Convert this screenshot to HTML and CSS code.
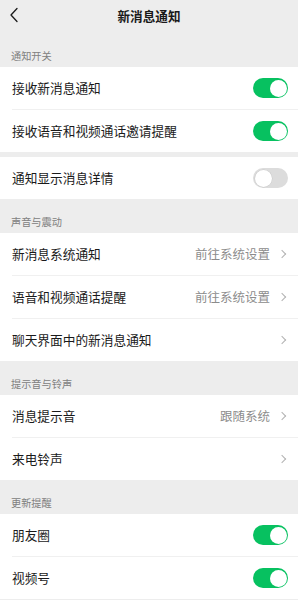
FILE: index.html
```html
<html>
<head>
<meta charset="utf-8">
<link rel="stylesheet" href="styles.css">
</head>
<body>
<div class="page">
  <div class="navbar">
    <span class="navbar__back">
      <svg width="10" height="16" viewBox="0 0 10 16" fill="none" stroke="#1a1a1a" stroke-width="1.3" stroke-linecap="round" stroke-linejoin="round"><path d="M8 1.5 L2 8 L8 14.5"/></svg>
    </span>
    <span class="navbar__title">新消息通知</span>
  </div>

  <div class="group-title">通知开关</div>
  <div class="cells">
    <div class="cell">
      <span class="cell__label">接收新消息通知</span>
      <span class="switch switch--on"></span>
    </div>
    <div class="cell">
      <span class="cell__label">接收语音和视频通话邀请提醒</span>
      <span class="switch switch--on"></span>
    </div>
  </div>
  <div class="group-gap"></div>
  <div class="cells">
    <div class="cell">
      <span class="cell__label">通知显示消息详情</span>
      <span class="switch"></span>
    </div>
  </div>

  <div class="group-title">声音与震动</div>
  <div class="cells">
    <div class="cell">
      <span class="cell__label">新消息系统通知</span>
      <span class="cell__value">前往系统设置</span>
      <span class="chevron"></span>
    </div>
    <div class="cell">
      <span class="cell__label">语音和视频通话提醒</span>
      <span class="cell__value">前往系统设置</span>
      <span class="chevron"></span>
    </div>
    <div class="cell">
      <span class="cell__label">聊天界面中的新消息通知</span>
      <span class="chevron"></span>
    </div>
  </div>

  <div class="group-title">提示音与铃声</div>
  <div class="cells">
    <div class="cell">
      <span class="cell__label">消息提示音</span>
      <span class="cell__value">跟随系统</span>
      <span class="chevron"></span>
    </div>
    <div class="cell">
      <span class="cell__label">来电铃声</span>
      <span class="chevron"></span>
    </div>
  </div>

  <div class="group-title">更新提醒</div>
  <div class="cells">
    <div class="cell">
      <span class="cell__label">朋友圈</span>
      <span class="switch switch--on"></span>
    </div>
    <div class="cell">
      <span class="cell__label">视频号</span>
      <span class="switch switch--on"></span>
    </div>
  </div>
</div>
</body>
</html>
```

FILE: styles.css
```css
/* reset */
* {
  padding: 0;
  margin: 0;
  box-sizing: border-box;
}

body {
  background-color: #ededed;
  font-family: "Noto Sans CJK SC", "Noto Sans", sans-serif;
  color: #1a1a1a;
}

.page {
  width: 298px;
  height: 600px;
  overflow: hidden;
}

.navbar {
  height: 33px;
  display: flex;
  align-items: center;
  justify-content: center;
  position: relative;
}

.navbar__back {
  position: absolute;
  left: 9px;
  top: 7px;
  display: flex;
}

.navbar__title {
  font-size: 12.6px;
  font-weight: bold;
  line-height: 1;
}

.group-title {
  height: 34px;
  display: flex;
  align-items: flex-end;
  padding: 0 0 5px 11px;
  font-size: 10.2px;
  line-height: 12px;
  color: #808080;
}

.group-gap {
  height: 5px;
}

.cells {
  background-color: #fff;
}

.cell {
  height: 43px;
  margin-left: 12px;
  padding-right: 10px;
  display: flex;
  align-items: center;
  border-bottom: 1px solid #f0f0f0;
}

.cell:last-child {
  height: 42px;
  border-bottom: 0;
}

.cell__label {
  flex: 1;
  font-size: 12.7px;
  line-height: 1;
}

.cell__value {
  font-size: 12.5px;
  line-height: 1;
  color: #8c8c8c;
  margin-right: 9px;
}

.chevron {
  width: 6px;
  height: 6px;
  border-color: #b2b2b2;
  border-style: solid;
  border-width: 1.2px 1.2px 0 0;
  transform: rotate(45deg);
  margin-right: 3px;
}

.switch {
  width: 35px;
  height: 20px;
  border-radius: 10px;
  background-color: #dcdcdc;
  position: relative;
}

.switch::after {
  content: '';
  position: absolute;
  top: 1.5px;
  left: 1.5px;
  width: 17px;
  height: 17px;
  border-radius: 50%;
  background-color: #fff;
  box-shadow: 0 0 0 0.5px #c8c8c8;
}

.switch--on {
  background-color: #07c160;
}

.switch--on::after {
  left: 16.5px;
  box-shadow: none;
}
```
